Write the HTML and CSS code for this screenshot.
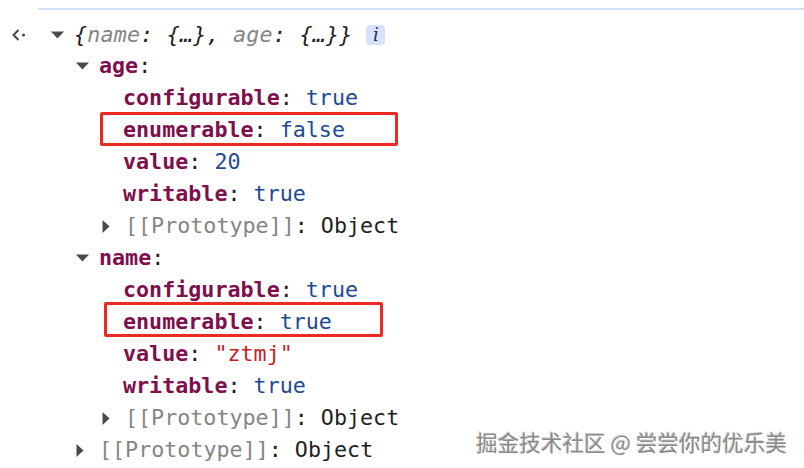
FILE: index.html
```html
<!DOCTYPE html>
<html>
<head>
<meta charset="utf-8">
<link rel="stylesheet" href="styles.css">
</head>
<body>
<div class="page">
  <div class="prev"></div>
  <div class="console">
    <div class="row top">
      <span class="gutter"><svg width="16" height="14" viewBox="0 0 16 14"><polyline points="7.5,2 2.5,7 7.5,12" fill="none" stroke="#444444" stroke-width="2"/><circle cx="12.5" cy="7" r="1.5" fill="#444444"/></svg></span>
      <span class="tw"><svg class="down" width="13" height="8" viewBox="0 0 13 8"><polygon points="0,0.5 13,0.5 6.5,7.5" fill="#4a4a4a"/></svg></span>
      <span class="preview">{<span class="g">name</span>: {…}, <span class="g">age</span>: {…}}</span>
      <span class="info">i</span>
    </div>
    <div class="row d1">
      <span class="tw"><svg width="13" height="8" viewBox="0 0 13 8"><polygon points="0,0.5 13,0.5 6.5,7.5" fill="#4a4a4a"/></svg></span>
      <span><span class="k">age</span>:</span>
    </div>
    <div class="row d2t"><span class="k">configurable</span>:&nbsp;<span class="b">true</span></div>
    <div class="row d2t"><span class="hl hl1"></span><span class="k">enumerable</span>:&nbsp;<span class="b">false</span></div>
    <div class="row d2t"><span class="k">value</span>:&nbsp;<span class="b">20</span></div>
    <div class="row d2t"><span class="k">writable</span>:&nbsp;<span class="b">true</span></div>
    <div class="row d2">
      <span class="tw"><svg width="8" height="13" viewBox="0 0 8 13"><polygon points="0.5,0 7.5,6.5 0.5,13" fill="#4a4a4a"/></svg></span>
      <span><span class="g">[[Prototype]]</span>:&nbsp;Object</span>
    </div>
    <div class="row d1">
      <span class="tw"><svg width="13" height="8" viewBox="0 0 13 8"><polygon points="0,0.5 13,0.5 6.5,7.5" fill="#4a4a4a"/></svg></span>
      <span><span class="k">name</span>:</span>
    </div>
    <div class="row d2t"><span class="k">configurable</span>:&nbsp;<span class="b">true</span></div>
    <div class="row d2t"><span class="hl hl2"></span><span class="k">enumerable</span>:&nbsp;<span class="b">true</span></div>
    <div class="row d2t"><span class="k">value</span>:&nbsp;<span class="s">"ztmj"</span></div>
    <div class="row d2t"><span class="k">writable</span>:&nbsp;<span class="b">true</span></div>
    <div class="row d2">
      <span class="tw"><svg width="8" height="13" viewBox="0 0 8 13"><polygon points="0.5,0 7.5,6.5 0.5,13" fill="#4a4a4a"/></svg></span>
      <span><span class="g">[[Prototype]]</span>:&nbsp;Object</span>
    </div>
    <div class="row d1">
      <span class="tw"><svg width="8" height="13" viewBox="0 0 8 13"><polygon points="0.5,0 7.5,6.5 0.5,13" fill="#4a4a4a"/></svg></span>
      <span><span class="g">[[Prototype]]</span>:&nbsp;Object</span>
    </div>
  </div>
  <div class="wm">掘金技术社区 @ 尝尝你的优乐美</div>
</div>
</body>
</html>
```

FILE: styles.css
```css
html, body {
  margin: 0;
  padding: 0;
  background: #ffffff;
}
.page {
  position: relative;
  width: 804px;
  height: 468px;
  overflow: hidden;
  font-family: "DejaVu Sans Mono", monospace;
  font-size: 21.7px;
  color: #1f1f1f;
}
.prev {
  height: 8px;
  margin-left: 38px;
  border-bottom: 2px solid #d4e0f8;
}
.console {
  padding-top: 9px;
}
.row {
  position: relative;
  display: flex;
  align-items: center;
  height: 32px;
  line-height: 32px;
  white-space: pre;
}
.row.top {
  height: 31px;
  padding-left: 11px;
}
.gutter {
  display: flex;
  align-items: center;
  width: 39px;
}
.tw {
  display: flex;
  align-items: center;
  width: 24px;
  padding-left: 1px;
  box-sizing: border-box;
}
.row.d1 { padding-left: 75px; }
.row.d2 { padding-left: 101px; }
.row.d2t { padding-left: 123px; }
.preview {
  font-style: italic;
  letter-spacing: 0.2px;
}
.g { color: #858585; }
.k { color: #7d0f4c; font-weight: bold; }
.b { color: #1f4a93; }
.s { color: #c5221f; }
.info {
  display: inline-flex;
  align-items: center;
  justify-content: center;
  width: 19px;
  height: 20px;
  margin-left: 14px;
  background: #d6e3fb;
  border-radius: 4px;
  font-family: "DejaVu Serif", serif;
  font-style: italic;
  font-size: 18px;
  line-height: 20px;
  color: #1e2f55;
}
.hl {
  position: absolute;
  border: 3px solid #ec2a24;
  border-radius: 2px;
  box-sizing: border-box;
}
.hl1 {
  left: 100px;
  top: -2px;
  width: 298px;
  height: 34px;
}
.hl2 {
  left: 104px;
  top: -4px;
  width: 279px;
  height: 35px;
}
.wm {
  position: absolute;
  left: 476px;
  top: 427px;
  font-family: "Noto Sans CJK SC", sans-serif;
  font-size: 21.6px;
  line-height: 30px;
  color: #8a8a8a;
  text-shadow: 1px 1px 0 #ffffff, -1px -1px 0 #d0d0d0;
  white-space: pre;
}
```
